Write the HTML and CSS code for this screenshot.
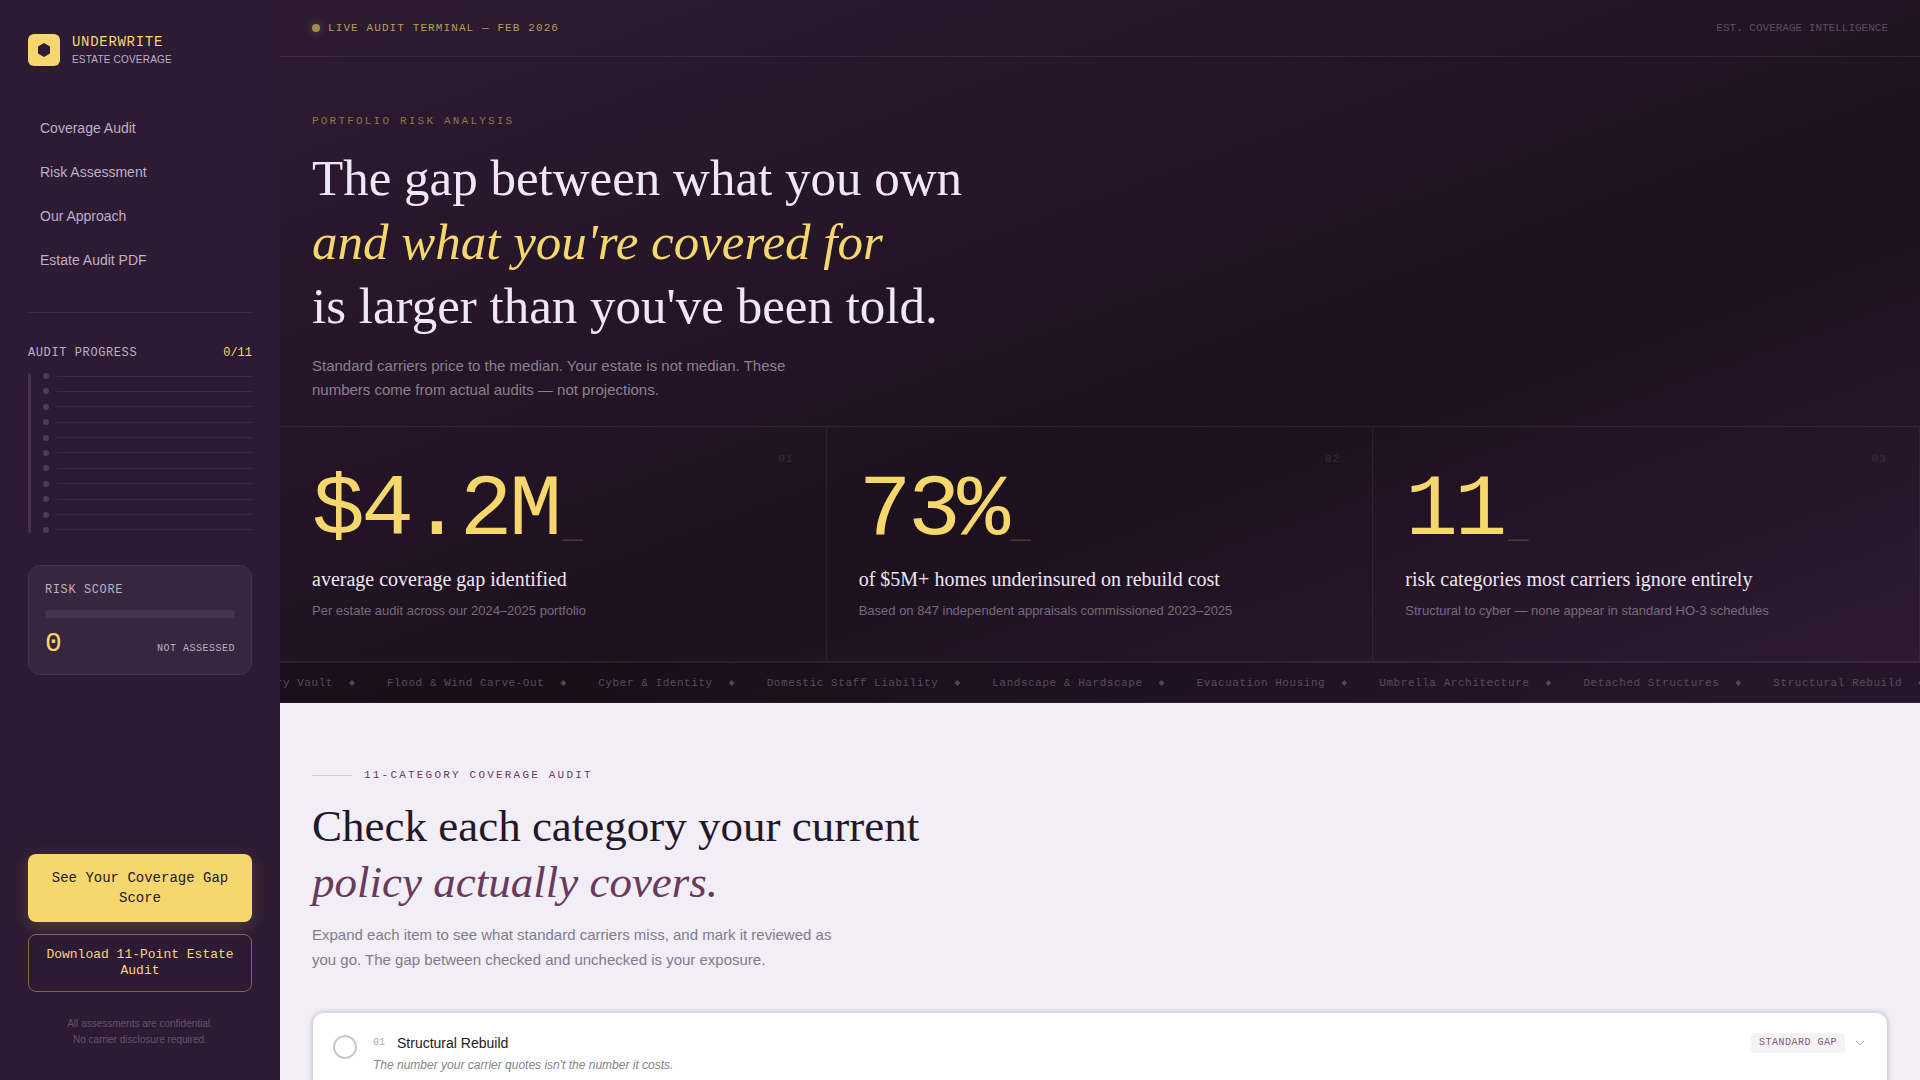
FILE: index.html
```html
<!DOCTYPE html>
<html lang="en">
<head>
  <meta charset="UTF-8">
  <meta name="viewport" content="width=device-width, initial-scale=1.0">
  <title>Underwrite | Estate Coverage</title>
  <link rel="stylesheet" href="styles.css">
</head>
<body>
  <aside class="sidebar">
    <a class="brand" href="#">
      <span class="brand-mark">
        <svg width="14" height="16" viewBox="0 0 14 16"><path d="M7 1L13 4.500V11.500L7 15L1 11.500V4.500Z" fill="#2d1b33"/></svg>
      </span>
      <span class="brand-text">
        <span class="brand-name">UNDERWRITE</span>
        <span class="brand-sub">ESTATE COVERAGE</span>
      </span>
    </a>

    <nav class="side-nav">
      <a href="#audit">Coverage Audit</a>
      <a href="#risk">Risk Assessment</a>
      <a href="#approach">Our Approach</a>
      <a href="#pdf">Estate Audit PDF</a>
    </nav>

    <section class="progress">
      <div class="progress-head">
        <span class="mono-label">AUDIT PROGRESS</span>
        <span class="progress-count">0/11</span>
      </div>
      <div class="progress-body">
        <div class="progress-track"></div>
        <ul class="progress-list">
          <li></li><li></li><li></li><li></li><li></li><li></li>
          <li></li><li></li><li></li><li></li><li></li>
        </ul>
      </div>
    </section>

    <section class="risk-card" id="risk">
      <span class="mono-label">RISK SCORE</span>
      <div class="risk-bar"></div>
      <div class="risk-row">
        <span class="risk-value">0</span>
        <span class="risk-status">NOT ASSESSED</span>
      </div>
    </section>

    <div class="side-bottom">
      <button type="button" class="btn btn-primary">See Your Coverage Gap Score</button>
      <button type="button" class="btn btn-outline">Download 11-Point Estate Audit</button>
      <p class="side-note">All assessments are confidential.<br>No carrier disclosure required.</p>
    </div>
  </aside>

  <main class="main">
    <section class="hero">
      <div class="topbar">
        <span class="live"><span class="live-dot"></span>LIVE AUDIT TERMINAL — FEB 2026</span>
        <span class="topbar-right">EST. COVERAGE INTELLIGENCE</span>
      </div>

      <div class="hero-intro">
        <p class="eyebrow">PORTFOLIO RISK ANALYSIS</p>
        <h1>The gap between what you own<br><em>and what you're covered for</em><br>is larger than you've been told.</h1>
        <p class="hero-copy">Standard carriers price to the median. Your estate is not median. These numbers come from actual audits — not projections.</p>
      </div>

      <div class="stats">
        <article class="stat">
          <span class="stat-index">01</span>
          <p class="stat-number">$4.2M<span class="cursor">_</span></p>
          <p class="stat-label">average coverage gap identified</p>
          <p class="stat-sub">Per estate audit across our 2024–2025 portfolio</p>
        </article>
        <article class="stat">
          <span class="stat-index">02</span>
          <p class="stat-number">73%<span class="cursor">_</span></p>
          <p class="stat-label">of $5M+ homes underinsured on rebuild cost</p>
          <p class="stat-sub">Based on 847 independent appraisals commissioned 2023–2025</p>
        </article>
        <article class="stat">
          <span class="stat-index">03</span>
          <p class="stat-number">11<span class="cursor">_</span></p>
          <p class="stat-label">risk categories most carriers ignore entirely</p>
          <p class="stat-sub">Structural to cyber — none appear in standard HO-3 schedules</p>
        </article>
      </div>

      <div class="ticker">
        <ul class="ticker-track">
          <li>Jewelry Vault</li>
          <li>Flood &amp; Wind Carve-Out</li>
          <li>Cyber &amp; Identity</li>
          <li>Domestic Staff Liability</li>
          <li>Landscape &amp; Hardscape</li>
          <li>Evacuation Housing</li>
          <li>Umbrella Architecture</li>
          <li>Detached Structures</li>
          <li>Structural Rebuild</li>
        </ul>
      </div>
    </section>

    <section class="audit" id="audit">
      <p class="audit-eyebrow">11-CATEGORY COVERAGE AUDIT</p>
      <h2>Check each category your current<br><em>policy actually covers.</em></h2>
      <p class="audit-copy">Expand each item to see what standard carriers miss, and mark it reviewed as you go. The gap between checked and unchecked is your exposure.</p>

      <article class="item">
        <input type="checkbox" class="item-check" id="item-01">
        <label class="item-text" for="item-01">
          <span class="item-title"><span class="item-index">01</span>Structural Rebuild</span>
          <span class="item-sub">The number your carrier quotes isn't the number it costs.</span>
        </label>
        <span class="badge">STANDARD GAP</span>
        <button type="button" class="item-toggle" aria-label="Expand Structural Rebuild">
          <svg width="10" height="6" viewBox="0 0 10 6"><path d="M1 1L5 5L9 1" fill="none" stroke="#b5b0b8" stroke-width="1"/></svg>
        </button>
      </article>
    </section>
  </main>
</body>
</html>
```
FILE: styles.css
```css
* {
  box-sizing: border-box;
  margin: 0;
  padding: 0;
}

:root {
  --plum: #2d1b33;
  --gold: #f5d76e;
  --mist: #f0e6f6;
  --muted: #bfaec6;
  --line: rgba(240, 230, 246, 0.07);
  --sans: "Liberation Sans", Arial, sans-serif;
  --serif: "Liberation Serif", "Times New Roman", serif;
  --mono: "Liberation Mono", "Courier New", monospace;
}

body {
  display: flex;
  height: 100vh;
  overflow: hidden;
  font-family: var(--sans);
  background: #f2eef7;
}

ul {
  list-style: none;
}

/* sidebar */
.sidebar {
  display: flex;
  flex-direction: column;
  flex: 0 0 280px;
  height: 100vh;
  padding: 32px 28px;
  background: var(--plum);
}

.brand {
  display: flex;
  align-items: center;
  gap: 12px;
  text-decoration: none;
}

.brand-mark {
  display: flex;
  align-items: center;
  justify-content: center;
  width: 32px;
  height: 32px;
  border-radius: 6px;
  background: var(--gold);
}

.brand-text {
  display: flex;
  flex-direction: column;
}

.brand-name {
  font: 14px/20px var(--mono);
  letter-spacing: 0.05em;
  color: var(--gold);
}

.brand-sub {
  font-size: 10px;
  line-height: 16px;
  letter-spacing: 0.02em;
  color: var(--muted);
}

.side-nav {
  display: flex;
  flex-direction: column;
  gap: 4px;
  margin-top: 40px;
  padding-bottom: 32px;
  border-bottom: 1px solid var(--line);
}

.side-nav a {
  padding: 10px 12px;
  font-size: 14px;
  line-height: 20px;
  color: var(--muted);
  text-decoration: none;
}

.mono-label {
  font: 12px/16px var(--mono);
  letter-spacing: 0.05em;
  color: var(--muted);
}

.progress {
  margin-top: 32px;
}

.progress-head {
  display: flex;
  justify-content: space-between;
}

.progress-count {
  font: 12px/16px var(--mono);
  color: var(--gold);
}

.progress-body {
  display: flex;
  gap: 12px;
  height: 160px;
  margin-top: 12px;
}

.progress-track {
  width: 3px;
  border-radius: 2px;
  background: #46334b;
}

.progress-list {
  display: flex;
  flex: 1;
  flex-direction: column;
  justify-content: space-between;
}

.progress-list li {
  display: flex;
  align-items: center;
  gap: 8px;
}

.progress-list li::before {
  content: "";
  width: 6px;
  height: 6px;
  border-radius: 50%;
  background: #4f3b55;
}

.progress-list li::after {
  content: "";
  flex: 1;
  height: 1px;
  background: #3b2841;
}

.risk-card {
  margin-top: 32px;
  padding: 16px 16px 14px;
  border: 1px solid #433048;
  border-radius: 12px;
  background: #38263e;
}

.risk-card .mono-label {
  display: block;
}

.risk-bar {
  height: 8px;
  margin-top: 12px;
  border-radius: 4px;
  background: #46344d;
}

.risk-row {
  display: flex;
  align-items: baseline;
  justify-content: space-between;
  margin-top: 10px;
}

.risk-value {
  font: 28px/32px var(--mono);
  color: var(--gold);
}

.risk-status {
  font: 10px/16px var(--mono);
  letter-spacing: 0.05em;
  color: var(--muted);
}

.side-bottom {
  display: flex;
  flex-direction: column;
  gap: 12px;
  margin-top: auto;
}

.btn {
  border-radius: 8px;
  font-family: var(--mono);
  cursor: pointer;
}

.btn-primary {
  padding: 14px 20px;
  border: 0;
  font-size: 14px;
  line-height: 20px;
  color: #231827;
  background: var(--gold);
  box-shadow: 0 4px 16px rgba(245, 215, 110, 0.2);
}

.btn-outline {
  padding: 12px 16px;
  border: 1px solid rgba(245, 215, 110, 0.4);
  font-size: 13px;
  line-height: 16px;
  color: #f3d58a;
  background: transparent;
}

.side-note {
  margin-top: 12px;
  font-size: 10px;
  line-height: 16px;
  text-align: center;
  color: #66526c;
}

/* hero */
.main {
  flex: 1;
  min-width: 0;
}

.hero {
  background: linear-gradient(160deg, #2e1b33 0%, #1d111e 60%, #2f1b34 100%);
}

.topbar {
  display: flex;
  align-items: center;
  justify-content: space-between;
  padding: 20px 32px;
  border-bottom: 1px solid var(--line);
  font: 11px/16px var(--mono);
}

.live {
  display: flex;
  align-items: center;
  gap: 8px;
  letter-spacing: 0.1em;
  color: #b69f5c;
}

.live-dot {
  width: 8px;
  height: 8px;
  border-radius: 50%;
  background: #a08c50;
  box-shadow: 0 0 8px rgba(245, 215, 110, 0.3);
}

.topbar-right {
  color: #5d4c60;
}

.hero-intro {
  padding: 56px 32px 24px;
}

.eyebrow {
  font: 11px/16px var(--mono);
  letter-spacing: 0.2em;
  color: #8c7848;
}

h1,
h2 {
  font-family: var(--serif);
  font-weight: 400;
}

h1 {
  margin-top: 17px;
  font-size: 51px;
  line-height: 64px;
  color: var(--mist);
}

h1 em {
  color: var(--gold);
}

.hero-copy {
  max-width: 500px;
  margin-top: 16px;
  font-size: 15px;
  line-height: 24px;
  color: #8d7f92;
}

.stats {
  display: grid;
  grid-template-columns: repeat(3, 1fr);
  border-top: 1px solid var(--line);
  border-bottom: 1px solid var(--line);
}

.stat {
  position: relative;
  padding: 36px 32px 40px;
  border-right: 1px solid var(--line);
}

.stat-index {
  position: absolute;
  top: 24px;
  right: 32px;
  font: 11px/16px var(--mono);
  letter-spacing: 0.1em;
  color: #3a2b3e;
}

.stat-number {
  font: 88px/96px var(--mono);
  letter-spacing: -0.04em;
  color: var(--gold);
}

.cursor {
  margin-left: 4px;
  font-size: 34px;
  line-height: 1;
  vertical-align: -3px;
  opacity: 0.2;
}

.stat-label {
  margin-top: 8px;
  font: 20px/24px var(--serif);
  color: var(--mist);
}

.stat-sub {
  margin-top: 10px;
  font-size: 13px;
  line-height: 20px;
  color: #776a7b;
}

.ticker {
  overflow: hidden;
  padding: 12px 0 11px;
  border-top: 1px solid var(--line);
  border-bottom: 1px solid var(--line);
  background: rgba(0, 0, 0, 0.15);
}

/* the strip is always mid-scroll */
.ticker-track {
  display: flex;
  margin-left: -40px;
}

.ticker-track li {
  display: flex;
  flex: none;
  align-items: center;
  gap: 16px;
  margin-right: 32px;
  font: 11px/16px var(--mono);
  letter-spacing: 0.05em;
  color: #5a4b5d;
}

.ticker-track li::after {
  content: "";
  width: 6px;
  height: 6px;
  background: #54464d;
  clip-path: polygon(50% 0, 100% 50%, 50% 100%, 0 50%);
}

/* audit */
.audit {
  padding: 64px 32px;
}

.audit-eyebrow {
  display: flex;
  align-items: center;
  gap: 12px;
  font: 11px/16px var(--mono);
  letter-spacing: 0.2em;
  color: #6b3a5b;
}

.audit-eyebrow::before {
  content: "";
  width: 40px;
  height: 1px;
  background: #cfc8d2;
}

h2 {
  margin-top: 15px;
  font-size: 45px;
  line-height: 56px;
  color: #231827;
}

h2 em {
  color: #6b3a5b;
}

.audit-copy {
  max-width: 540px;
  margin-top: 12px;
  font-size: 15px;
  line-height: 25px;
  color: #827a88;
}

.item {
  display: flex;
  align-items: flex-start;
  margin-top: 40px;
  padding: 20px 20px 24px;
  border: 1px solid #d8d3dc;
  border-radius: 12px;
  background: #fff;
  box-shadow: 0 0 4px rgba(45, 27, 51, 0.25);
}

.item-check {
  appearance: none;
  width: 24px;
  height: 24px;
  margin: 2px 16px 0 0;
  border: 2px solid #c9c9c9;
  border-radius: 50%;
  cursor: pointer;
}

.item-check:checked {
  background: var(--gold);
}

.item-text {
  display: flex;
  flex: 1;
  flex-direction: column;
  gap: 2px;
}

.item-title {
  display: flex;
  align-items: center;
  gap: 12px;
  font-size: 14px;
  line-height: 20px;
  color: #1b1b1b;
}

.item-index {
  font: 10px/16px var(--mono);
  color: #a9a9a9;
}

.item-sub {
  font-size: 12px;
  line-height: 20px;
  font-style: italic;
  color: #858585;
}

.badge {
  padding: 2px 8px;
  border-radius: 4px;
  font: 10px/16px var(--mono);
  letter-spacing: 0.05em;
  color: #855c78;
  background: #f4f2f5;
}

.item-toggle {
  display: flex;
  align-items: center;
  height: 20px;
  margin-left: 8px;
  padding: 0 2px;
  border: 0;
  background: none;
  cursor: pointer;
}
```
